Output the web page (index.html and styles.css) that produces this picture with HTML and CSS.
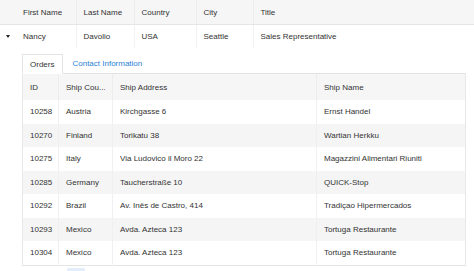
FILE: index.html
```html
<!DOCTYPE html>
<html lang="en">
<head>
  <meta charset="UTF-8">
  <title>Employees</title>
  <link rel="stylesheet" href="styles.css">
</head>
<body>

  <table class="grid master">
    <colgroup>
      <col class="c-expand">
      <col class="c-first">
      <col class="c-last">
      <col class="c-country">
      <col class="c-city">
      <col>
    </colgroup>
    <thead>
      <tr>
        <th></th>
        <th>First Name</th>
        <th>Last Name</th>
        <th>Country</th>
        <th>City</th>
        <th>Title</th>
      </tr>
    </thead>
    <tbody>
      <tr class="master-row">
        <td class="expand"><span class="arrow"></span></td>
        <td>Nancy</td>
        <td>Davolio</td>
        <td>USA</td>
        <td>Seattle</td>
        <td>Sales Representative</td>
      </tr>
      <tr class="detail-row">
        <td colspan="6" class="detail-cell">
          <div class="tabs">
            <span class="tab active">Orders</span>
            <span class="tab">Contact Information</span>
          </div>

          <table class="grid orders">
            <colgroup>
              <col class="c-id">
              <col class="c-shipcountry">
              <col class="c-address">
              <col>
            </colgroup>
            <thead>
              <tr>
                <th>ID</th>
                <th>Ship Cou...</th>
                <th>Ship Address</th>
                <th>Ship Name</th>
              </tr>
            </thead>
            <tbody>
              <tr><td>10258</td><td>Austria</td><td>Kirchgasse 6</td><td>Ernst Handel</td></tr>
              <tr class="alt"><td>10270</td><td>Finland</td><td>Torikatu 38</td><td>Wartian Herkku</td></tr>
              <tr><td>10275</td><td>Italy</td><td>Via Ludovico il Moro 22</td><td>Magazzini Alimentari Riuniti</td></tr>
              <tr class="alt"><td>10285</td><td>Germany</td><td>Taucherstraße 10</td><td>QUICK-Stop</td></tr>
              <tr><td>10292</td><td>Brazil</td><td>Av. Inês de Castro, 414</td><td>Tradiçao Hipermercados</td></tr>
              <tr class="alt"><td>10293</td><td>Mexico</td><td>Avda. Azteca 123</td><td>Tortuga Restaurante</td></tr>
              <tr><td>10304</td><td>Mexico</td><td>Avda. Azteca 123</td><td>Tortuga Restaurante</td></tr>
            </tbody>
          </table>

          <div class="pager">
            <span class="page current"></span>
          </div>
        </td>
      </tr>
    </tbody>
  </table>

</body>
</html>
```

FILE: styles.css
```css
body {
  font-family: "Liberation Sans", Arial, sans-serif;
  font-size: 8px;
  color: #333;
  background-color: white;
  margin: 0;
  padding: 0;
}

.grid {
  width: 100%;
  border-collapse: collapse;
  table-layout: fixed;
}

.grid th {
  font-weight: normal;
  text-align: left;
  background-color: #f6f6f6;
  white-space: nowrap;
  overflow: hidden;
}

.grid th, .grid td {
  padding: 0 0 0 7px;
}

/* master grid */

.master > thead th {
  height: 24px;
  border-bottom: 1px solid #e6e6e6;
  border-left: 1px solid #ececec;
}

.master > thead th:first-child,
.master > thead th:nth-child(2) {
  border-left: none;
}

.c-expand { width: 16px; }
.c-first { width: 60px; }
.c-last { width: 58px; }
.c-country { width: 62px; }
.c-city { width: 57px; }

.master-row td {
  height: 23px;
  border-left: 1px solid #f2f2f2;
}

.master-row td:first-child,
.master-row td:nth-child(2) {
  border-left: none;
}

.master-row td.expand {
  padding: 0 0 0 6px;
}

.arrow {
  display: block;
  width: 0;
  height: 0;
  border-left: 2px solid transparent;
  border-right: 2px solid transparent;
  border-top: 3px solid #222;
}

.detail-cell {
  padding: 6px 8px 0 22px !important;
  vertical-align: top;
}

/* tabs */

.tabs {
  display: flex;
  align-items: flex-end;
  height: 19px;
  border-bottom: 1px solid #e3e3e3;
}

.tab {
  display: flex;
  align-items: center;
  height: 19px;
  padding: 0 9px;
  color: #2b7fd4;
  box-sizing: border-box;
}

.tab.active {
  color: #333;
  background-color: white;
  border: 1px solid #e3e3e3;
  border-bottom: 1px solid white;
  height: 20px;
  margin-bottom: -1px;
  padding: 0 8px 0 7px;
}

/* orders grid */

.orders {
  border-left: 1px solid #e8e8e8;
  border-right: 1px solid #e8e8e8;
  border-bottom: 1px solid #e3e3e3;
}

.orders th {
  height: 26px;
  border-left: 1px solid #ececec;
}

.orders td {
  height: 23.5px;
  border-left: 1px solid #f0f0f0;
}

.orders th:first-child,
.orders td:first-child {
  border-left: none;
}

.orders tr.alt td {
  background-color: #f5f5f5;
}

.c-id { width: 36px; }
.c-shipcountry { width: 54px; }
.c-address { width: 204px; }

.pager {
  display: flex;
  padding: 2px 0 0 45px;
}

.page {
  display: block;
  width: 18px;
  height: 8px;
}

.page.current {
  background-color: #e3eefa;
}
```
